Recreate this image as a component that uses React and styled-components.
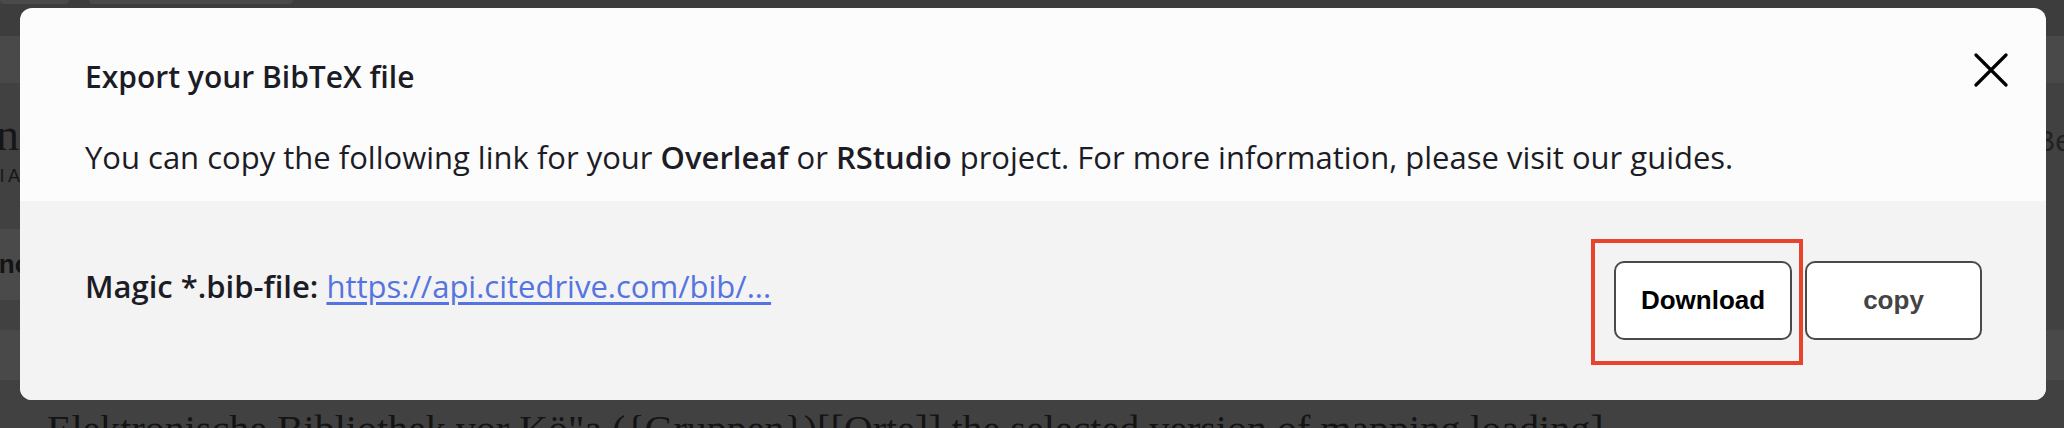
import React from "react";
import styled, { createGlobalStyle } from "styled-components";

const GlobalStyle = createGlobalStyle`
  html, body {
    margin: 0;
    padding: 0;
    background: #414141;
    overflow: hidden;
  }
  #root {
    height: 428px;
  }
`;

const Page = styled.div`
  position: relative;
  width: 2064px;
  height: 428px;
  overflow: hidden;
  background: #414141;
  font-family: "Liberation Serif", serif;
`;

// dimmed page that sits under the dialog
const TopBar = styled.div`
  height: 36px;
  background: #3d3d3d;
  display: flex;
  gap: 20px;
  align-items: flex-start;
`;

const Tab = styled.div`
  width: ${(p) => p.$w}px;
  height: 4px;
  background: #4a4a4a;
  border-radius: 0 0 6px 6px;
`;

const Band = styled.div`
  height: ${(p) => p.$h}px;
  background: ${(p) => p.$bg || "#414141"};
`;

const Hero = styled.div`
  height: 146px;
  display: flex;
  justify-content: space-between;
  align-items: flex-start;
`;

const HeroLeft = styled.div`
  display: flex;
  flex-direction: column;
  margin-left: -4px;
`;

const HeroTitle = styled.div`
  font-family: "Liberation Serif", serif;
  font-size: 46px;
  line-height: 60px;
  margin-top: 22px;
  color: #161616;
`;

const HeroMeta = styled.div`
  font-family: "Liberation Sans", sans-serif;
  font-size: 18px;
  line-height: 22px;
  color: #161616;
  margin-left: 4px;
`;

const HeroRight = styled.div`
  font-family: "Liberation Sans", sans-serif;
  font-size: 30px;
  line-height: 40px;
  margin-top: 38px;
  margin-right: -8px;
  color: #222;
`;

const SideRow = styled.div`
  height: 71px;
  display: flex;
`;

const SideCell = styled.div`
  width: 120px;
  background: #4a4a4a;
  font-family: "Liberation Sans", sans-serif;
  font-weight: 700;
  font-size: 26px;
  line-height: 71px;
  color: #141414;
  text-indent: -20px;
`;

const BottomText = styled.div`
  padding: 26px 0 0 47px;
  font-family: "Liberation Serif", serif;
  font-size: 40px;
  line-height: 48px;
  white-space: nowrap;
  color: #141414;
`;

// dialog
const Modal = styled.div`
  position: absolute;
  top: 8px;
  left: 20px;
  width: 2026px;
  height: 392px;
  border-radius: 12px;
  overflow: hidden;
  background: #fcfcfc;
  display: flex;
  flex-direction: column;
  font-family: "Open Sans", "Liberation Sans", sans-serif;
  color: #1c1c26;
`;

const Header = styled.div`
  display: flex;
  justify-content: space-between;
  align-items: flex-start;
  padding: 45px 38px 0 65px;
`;

const Title = styled.h2`
  margin: 4px 0 0;
  font-size: 30px;
  line-height: 40px;
  font-weight: 600;
`;

const CloseButton = styled.button`
  border: 0;
  padding: 0;
  background: none;
  width: 34px;
  height: 34px;
  display: flex;
  cursor: pointer;
`;

const Intro = styled.p`
  margin: 40px 0 0;
  padding: 0 65px;
  font-size: 31px;
  line-height: 40px;
  b {
    font-weight: 600;
  }
`;

const Footer = styled.div`
  margin-top: 24px;
  flex: 1;
  background: #f3f3f3;
  display: flex;
  align-items: center;
  justify-content: space-between;
  padding: 0 64px 0 65px;
`;

const LinkRow = styled.div`
  font-size: 31px;
  line-height: 40px;
  margin-bottom: 29px;
  b {
    font-weight: 600;
  }
  a {
    color: #5674e0;
    text-decoration: underline;
    text-underline-offset: 4px;
  }
`;

const Actions = styled.div`
  display: flex;
  gap: 13px;
`;

const Highlight = styled.div`
  position: relative;
  display: flex;
  &::after {
    content: "";
    position: absolute;
    top: -22px;
    left: -23px;
    right: -11px;
    bottom: -25px;
    border: 4px solid #e8432c;
    pointer-events: none;
  }
`;

const ActionButton = styled.button`
  width: ${(p) => p.$w}px;
  height: 79px;
  box-sizing: border-box;
  border: 2px solid #4a4a4a;
  border-radius: 10px;
  background: #fff;
  font-family: "Liberation Sans", Arial, sans-serif;
  font-weight: 700;
  font-size: 26px;
  color: ${(p) => (p.$muted ? "#444" : "#000")};
  cursor: pointer;
`;

const CloseIcon = () => (
  <svg width="34" height="34" viewBox="0 0 34 34" fill="none">
    <path
      d="M2 2 32 32M32 2 2 32"
      stroke="#000"
      strokeWidth="3.2"
      strokeLinecap="round"
    />
  </svg>
);

const bottomLine =
  'Elektronische Bibliothek vor Kö"a ({Gruppen})[[Orte]] the selected version of mapping loading]';

export default function App() {
  return (
    <Page>
      <GlobalStyle />
      <TopBar>
        <Tab $w={69} />
        <Tab $w={204} />
      </TopBar>
      <Band $h={47} $bg="#494949" />
      <Hero>
        <HeroLeft>
          <HeroTitle>ne</HeroTitle>
          <HeroMeta>l A</HeroMeta>
        </HeroLeft>
        <HeroRight>Be</HeroRight>
      </Hero>
      <SideRow>
        <SideCell>Anony</SideCell>
      </SideRow>
      <Band $h={30} />
      <Band $h={50} $bg="#494949" />
      <BottomText>{bottomLine}</BottomText>

      <Modal role="dialog">
        <Header>
          <Title>Export your BibTeX file</Title>
          <CloseButton aria-label="Close">
            <CloseIcon />
          </CloseButton>
        </Header>
        <Intro>
          You can copy the following link for your <b>Overleaf</b> or{" "}
          <b>RStudio</b> project. For more information, please visit our
          guides.
        </Intro>
        <Footer>
          <LinkRow>
            <b>Magic *.bib-file:</b>{" "}
            <a href="#bib">https://api.citedrive.com/bib/...</a>
          </LinkRow>
          <Actions>
            <Highlight>
              <ActionButton $w={178}>Download</ActionButton>
            </Highlight>
            <ActionButton $w={177} $muted>
              copy
            </ActionButton>
          </Actions>
        </Footer>
      </Modal>
    </Page>
  );
}
